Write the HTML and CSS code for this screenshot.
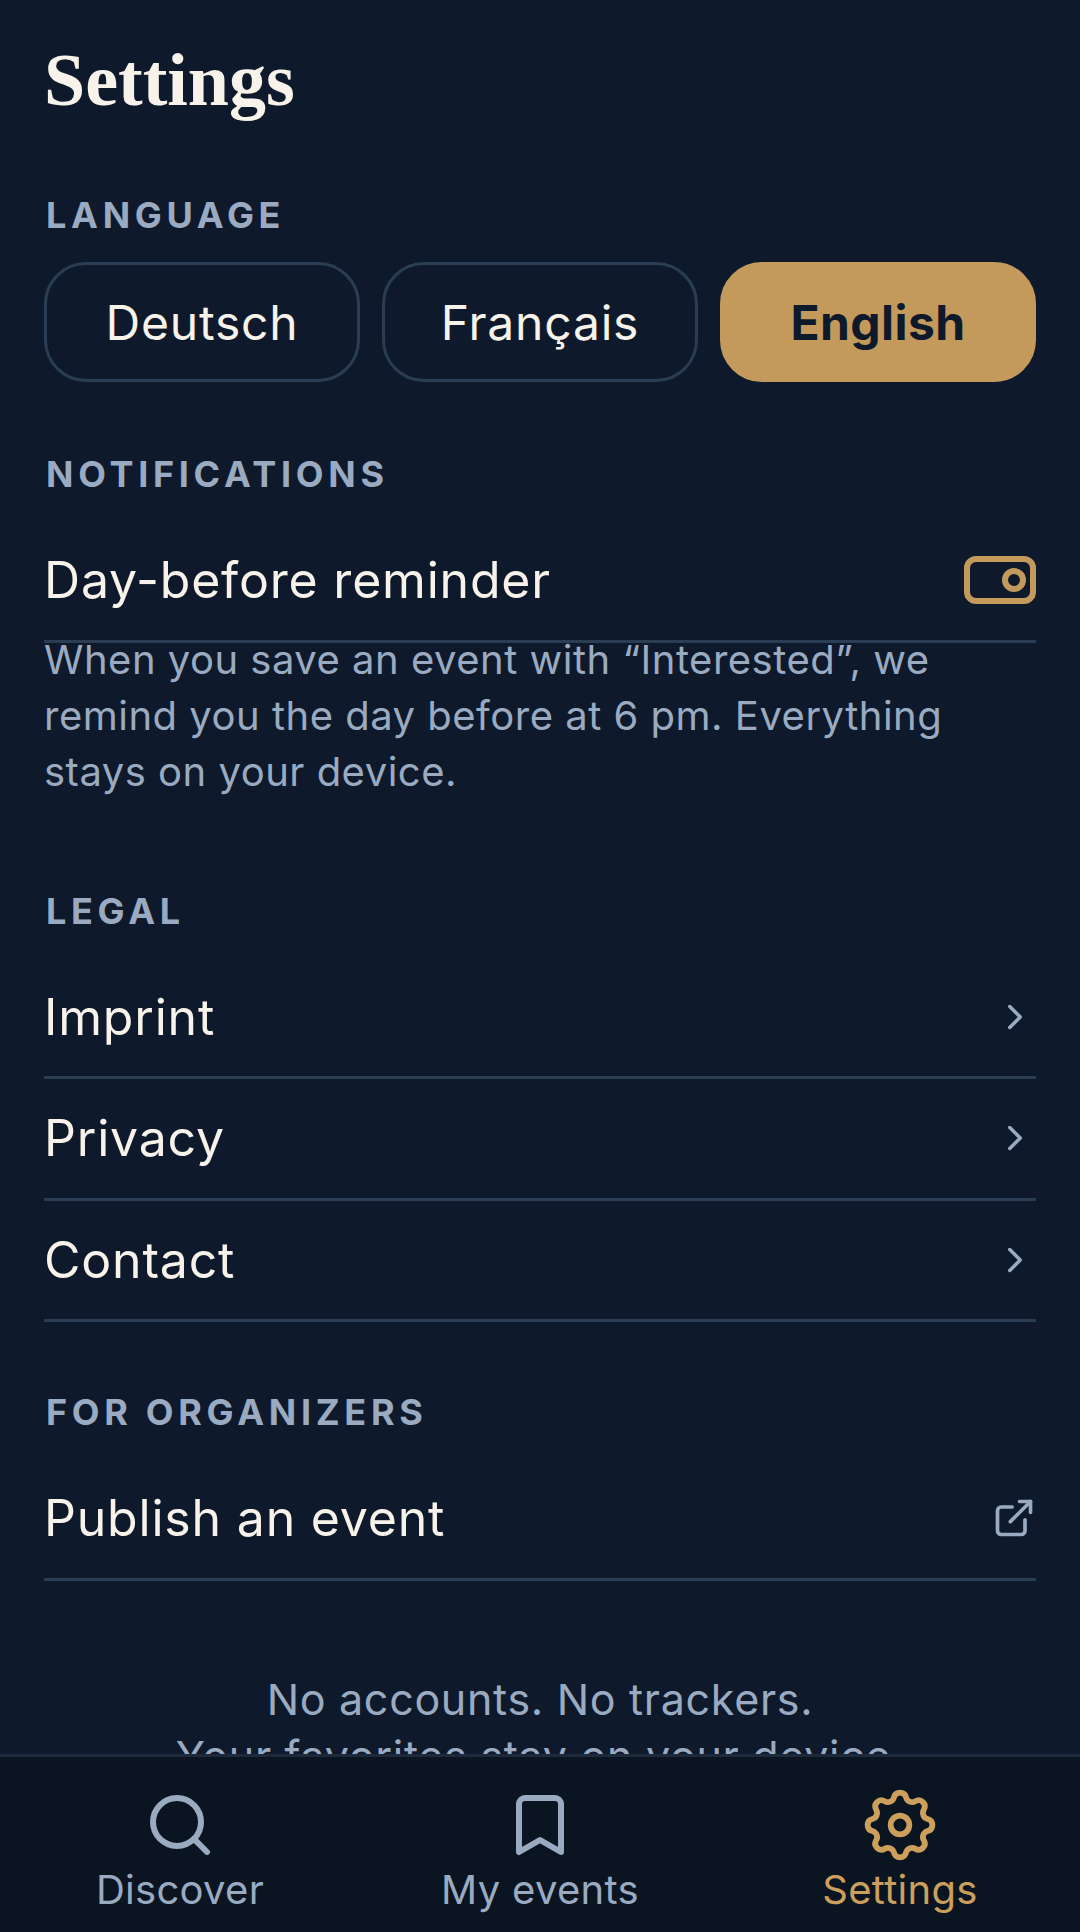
FILE: index.html
```html
<!DOCTYPE html>
<html lang="en">
<head>
    <meta charset="UTF-8">
    <meta name="viewport" content="width=device-width, initial-scale=1.0">
    <title>Settings</title>
    <link rel="stylesheet" href="styles.css">
</head>
<body>
    <main class="page">
        <h1 class="page-title">Settings</h1>

        <h2 class="section-label">LANGUAGE</h2>
        <div class="lang-row">
            <button class="lang-btn">Deutsch</button>
            <button class="lang-btn">Français</button>
            <button class="lang-btn active">English</button>
        </div>

        <h2 class="section-label notifications">NOTIFICATIONS</h2>
        <div class="row">
            <span>Day-before reminder</span>
            <svg class="toggle" width="72" height="48" viewBox="0 0 72 48" fill="none" stroke="currentColor" stroke-width="6">
                <rect x="3" y="3" width="66" height="42" rx="9"/>
                <circle cx="50" cy="24" r="9"/>
            </svg>
        </div>
        <p class="note">When you save an event with “Interested”, we remind you the day before at 6 pm. Everything stays on your device.</p>

        <h2 class="section-label legal">LEGAL</h2>
        <a class="row">
            <span>Imprint</span>
            <svg class="row-icon" width="42" height="42" viewBox="0 0 24 24"><path d="m9 18 6-6-6-6"/></svg>
        </a>
        <a class="row">
            <span>Privacy</span>
            <svg class="row-icon" width="42" height="42" viewBox="0 0 24 24"><path d="m9 18 6-6-6-6"/></svg>
        </a>
        <a class="row">
            <span>Contact</span>
            <svg class="row-icon" width="42" height="42" viewBox="0 0 24 24"><path d="m9 18 6-6-6-6"/></svg>
        </a>

        <h2 class="section-label organizers">FOR ORGANIZERS</h2>
        <a class="row">
            <span>Publish an event</span>
            <svg class="row-icon" width="44" height="44" viewBox="0 0 24 24"><path d="M18 13v6a2 2 0 0 1-2 2H5a2 2 0 0 1-2-2V8a2 2 0 0 1 2-2h6"/><path d="M15 3h6v6"/><path d="M10 14 21 3"/></svg>
        </a>

        <p class="footer-note">No accounts. No trackers.<br>Your favorites stay on your device.</p>
    </main>

    <nav class="tab-bar">
        <a class="tab">
            <svg width="72" height="72" viewBox="0 0 24 24"><circle cx="11" cy="11" r="8"/><path d="m21 21-4.35-4.35"/></svg>
            <span>Discover</span>
        </a>
        <a class="tab">
            <svg width="72" height="72" viewBox="0 0 24 24"><path d="m19 21-7-4-7 4V5a2 2 0 0 1 2-2h10a2 2 0 0 1 2 2v16z"/></svg>
            <span>My events</span>
        </a>
        <a class="tab active">
            <svg class="gear" width="72" height="72" viewBox="2 2 20 20"><path d="M10.325 4.317c.426-1.756 2.924-1.756 3.35 0a1.724 1.724 0 0 0 2.573 1.066c1.543-.94 3.31.826 2.37 2.37a1.724 1.724 0 0 0 1.065 2.572c1.756.426 1.756 2.924 0 3.35a1.724 1.724 0 0 0-1.066 2.573c.94 1.543-.826 3.31-2.37 2.37a1.724 1.724 0 0 0-2.572 1.065c-.426 1.756-2.924 1.756-3.35 0a1.724 1.724 0 0 0-2.573-1.066c-1.543.94-3.31-.826-2.37-2.37a1.724 1.724 0 0 0-1.065-2.572c-1.756-.426-1.756-2.924 0-3.35a1.724 1.724 0 0 0 1.066-2.573c-.94-1.543.826-3.31 2.37-2.37c1 .608 2.296.07 2.572-1.065z"/><circle cx="12" cy="12" r="2.6"/></svg>
            <span>Settings</span>
        </a>
    </nav>
</body>
</html>
```

FILE: styles.css
```css
* {
    box-sizing: border-box;
}

body {
    margin: 0;
    height: 1932px;
    display: flex;
    flex-direction: column;
    overflow: hidden;
    background: #0e1a2b;
    color: #f7f2ea;
    font-family: Inter, 'Noto Sans', sans-serif;
}

.page {
    flex: 1;
    min-height: 0;
    overflow: hidden;
    padding: 38px 44px 0;
}

.page-title {
    margin: 0 0 68px;
    font-family: 'Liberation Serif', serif;
    font-size: 74px;
    line-height: 84px;
    font-weight: 700;
}

.section-label {
    margin: 0 0 22px;
    padding-left: 2px;
    font-size: 36px;
    line-height: 50px;
    font-weight: 700;
    letter-spacing: 4.7px;
    color: #9aabc1;
}

.section-label.notifications {
    margin-top: 67px;
}

.section-label.legal {
    margin-top: 86px;
}

.section-label.organizers {
    margin-top: 65px;
}

.lang-row {
    display: flex;
    gap: 22px;
}

.lang-btn {
    flex: 1;
    height: 120px;
    padding: 0;
    border: 3px solid #2a3d52;
    border-radius: 42px;
    background: none;
    color: #f7f2ea;
    font-family: inherit;
    font-size: 48px;
    letter-spacing: 0.8px;
}

.lang-btn.active {
    border-color: #c49a5c;
    background: #c49a5c;
    color: #0e1a2b;
    font-weight: 700;
    letter-spacing: 0.4px;
}

.row {
    display: flex;
    justify-content: space-between;
    align-items: center;
    height: 121.5px;
    border-bottom: 3px solid #2a3d52;
    font-size: 50px;
    letter-spacing: 0.8px;
}

.row-icon {
    fill: none;
    stroke: #9aabc1;
    stroke-width: 2;
    stroke-linecap: round;
    stroke-linejoin: round;
}

.toggle {
    color: #c49a5c;
}

.note {
    margin: -11px 0 0;
    font-size: 40px;
    line-height: 56px;
    letter-spacing: 0.5px;
    color: #9aabc1;
}

.footer-note {
    margin: 90px 0 0;
    font-size: 43px;
    line-height: 57px;
    letter-spacing: 0.7px;
    text-align: center;
    color: #9aabc1;
}

.tab-bar {
    display: grid;
    grid-template-columns: repeat(3, 1fr);
    height: 178px;
    padding-top: 32px;
    border-top: 3px solid #1c2a3b;
    background: #0b1521;
}

.tab {
    display: flex;
    flex-direction: column;
    align-items: center;
    gap: 1px;
    font-size: 40px;
    line-height: 56px;
    letter-spacing: 0.3px;
    color: #9aabc1;
}

.tab svg {
    fill: none;
    stroke: currentColor;
    stroke-width: 2;
    stroke-linecap: round;
    stroke-linejoin: round;
}

.tab svg.gear {
    stroke-width: 1.6;
}

.tab.active {
    color: #cca05c;
}
```
